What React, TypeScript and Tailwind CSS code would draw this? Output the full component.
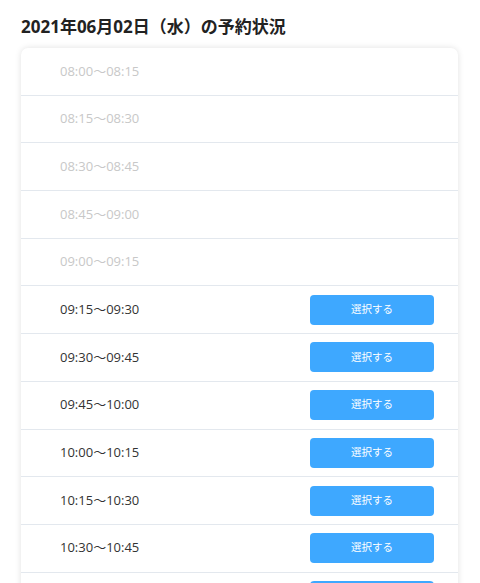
import React from 'react';

const slots = [
  { time: '08:00〜08:15', open: false },
  { time: '08:15〜08:30', open: false },
  { time: '08:30〜08:45', open: false },
  { time: '08:45〜09:00', open: false },
  { time: '09:00〜09:15', open: false },
  { time: '09:15〜09:30', open: true },
  { time: '09:30〜09:45', open: true },
  { time: '09:45〜10:00', open: true },
  { time: '10:00〜10:15', open: true },
  { time: '10:15〜10:30', open: true },
  { time: '10:30〜10:45', open: true },
  { time: '10:45〜11:00', open: true },
];

const App = () => {
  return (
    <div
      className="w-[480px] h-[583px] overflow-hidden bg-white px-[21px] pt-[16px]"
      style={{ fontFamily: '"Open Sans", "Noto Sans CJK JP", sans-serif' }}
    >
      <h2 className="text-[17px] leading-[22px] font-bold text-[#222] mb-[10px]">
        2021年06月02日（水）の予約状況
      </h2>
      <div className="w-[437px] rounded-[7px] bg-white shadow-[0_0_6px_rgba(0,0,0,0.12)]">
        {slots.map((slot, i) => (
          <div
            key={i}
            className="h-[47.7px] flex items-center justify-between pl-[39px] pr-[24px] border-b border-[#e3e8ee]"
          >
            <span className={`text-[13px] ${slot.open ? 'text-[#333]' : 'text-[#c8c8c8]'}`}>
              {slot.time}
            </span>
            {slot.open && (
              <button className="w-[124px] h-[30px] rounded-[4px] bg-[#3ea8ff] text-white text-[10.5px]">
                選択する
              </button>
            )}
          </div>
        ))}
      </div>
    </div>
  );
};

export default App;
